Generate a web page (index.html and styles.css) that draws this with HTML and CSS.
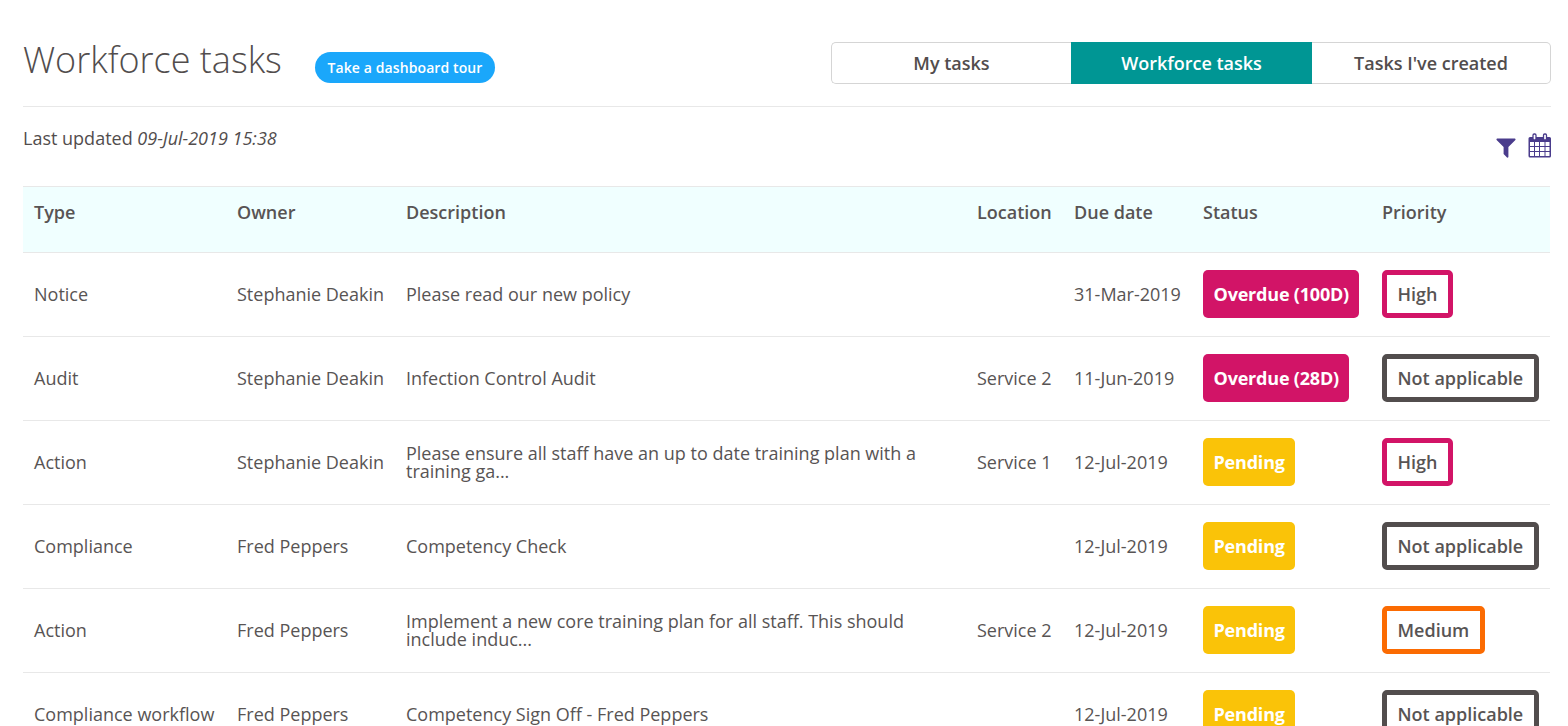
FILE: index.html
```html
<!DOCTYPE html>
<html lang="en">
<head>
    <meta charset="UTF-8">
    <meta name="viewport" content="width=device-width, initial-scale=1.0">
    <title>Workforce tasks</title>
    <link rel="stylesheet" href="styles.css">
</head>
<body>
    <div class="container">
        <header class="page-header">
            <h1>Workforce tasks</h1>
            <button class="tour-btn">Take a dashboard tour</button>
            <div class="tabs">
                <button class="tab">My tasks</button>
                <button class="tab active">Workforce tasks</button>
                <button class="tab">Tasks I've created</button>
            </div>
        </header>

        <div class="toolbar">
            <p class="updated">Last updated <em>09-Jul-2019 15:38</em></p>
            <div class="tools">
                <svg class="filter-icon" viewBox="0 0 20 20" width="20" height="20">
                    <path d="M1 0.5h18q1 0.6 0.4 1.6L12.4 9v10q-0.5 1-1.4 0.5L7.6 16V9L0.6 2.1Q0 1.1 1 0.5z" fill="#4a3c8c"/>
                </svg>
                <svg class="calendar-icon" viewBox="0 0 24 25" width="24" height="25">
                    <path fill-rule="evenodd" fill="#4a3c8c" d="M2 4h19.500q1.500 0 1.500 1.500V23q0 1.500-1.500 1.500H2Q0.500 24.500 0.500 23V5.500Q0.500 4 2 4zM2 9v4h4V9zM7 9v4h4V9zM12 9v4h4.500V9zM17.500 9v4h4V9zM2 14v4h4v-4zM7 14v4h4v-4zM12 14v4h4.500v-4zM17.500 14v4h4v-4zM2 19v4h4v-4zM7 19v4h4v-4zM12 19v4h4.500v-4zM17.500 19v4h4v-4z"/>
                    <rect x="5" y="1" width="3" height="6" rx="1.200" fill="#fff" stroke="#4a3c8c" stroke-width="1.300"/>
                    <rect x="15.500" y="1" width="3" height="6" rx="1.200" fill="#fff" stroke="#4a3c8c" stroke-width="1.300"/>
                </svg>
            </div>
        </div>

        <table class="task-list">
            <thead>
                <tr>
                    <th class="col-type">Type</th>
                    <th class="col-owner">Owner</th>
                    <th class="col-description">Description</th>
                    <th class="col-location">Location</th>
                    <th class="col-due">Due date</th>
                    <th class="col-status">Status</th>
                    <th class="col-priority">Priority</th>
                </tr>
            </thead>
            <tbody>
                <tr>
                    <td>Notice</td>
                    <td class="owner">Stephanie Deakin</td>
                    <td>Please read our new policy</td>
                    <td></td>
                    <td>31-Mar-2019</td>
                    <td><span class="status overdue">Overdue (100D)</span></td>
                    <td><span class="priority high">High</span></td>
                </tr>
                <tr>
                    <td>Audit</td>
                    <td class="owner">Stephanie Deakin</td>
                    <td>Infection Control Audit</td>
                    <td>Service 2</td>
                    <td>11-Jun-2019</td>
                    <td><span class="status overdue">Overdue (28D)</span></td>
                    <td><span class="priority">Not applicable</span></td>
                </tr>
                <tr>
                    <td>Action</td>
                    <td class="owner">Stephanie Deakin</td>
                    <td>Please ensure all staff have an up to date training plan with a training ga...</td>
                    <td>Service 1</td>
                    <td>12-Jul-2019</td>
                    <td><span class="status pending">Pending</span></td>
                    <td><span class="priority high">High</span></td>
                </tr>
                <tr>
                    <td>Compliance</td>
                    <td class="owner">Fred Peppers</td>
                    <td>Competency Check</td>
                    <td></td>
                    <td>12-Jul-2019</td>
                    <td><span class="status pending">Pending</span></td>
                    <td><span class="priority">Not applicable</span></td>
                </tr>
                <tr>
                    <td>Action</td>
                    <td class="owner">Fred Peppers</td>
                    <td>Implement a new core training plan for all staff. This should include induc...</td>
                    <td>Service 2</td>
                    <td>12-Jul-2019</td>
                    <td><span class="status pending">Pending</span></td>
                    <td><span class="priority medium">Medium</span></td>
                </tr>
                <tr>
                    <td>Compliance workflow</td>
                    <td class="owner">Fred Peppers</td>
                    <td>Competency Sign Off - Fred Peppers</td>
                    <td></td>
                    <td>12-Jul-2019</td>
                    <td><span class="status pending">Pending</span></td>
                    <td><span class="priority">Not applicable</span></td>
                </tr>
            </tbody>
        </table>
    </div>
</body>
</html>
```
FILE: styles.css
```css
* {
    box-sizing: border-box;
}

body {
    margin: 0;
    height: 726px;
    overflow: hidden;
    background-color: #fff;
    color: #524d4d;
    font-family: "Open Sans", sans-serif;
    font-size: 18px;
}

.container {
    padding: 0 17px 0 23px;
}

.page-header {
    display: flex;
    align-items: flex-start;
    height: 107px;
    padding-top: 42px;
    border-bottom: 1px solid #e8e8e8;
}

h1 {
    width: 292px;
    margin: 0;
    font-size: 36px;
    font-weight: 300;
    line-height: 36px;
    white-space: nowrap;
}

button {
    font-family: inherit;
    cursor: pointer;
}

.tour-btn {
    width: 180px;
    height: 31px;
    margin-top: 10px;
    padding: 0;
    border: none;
    border-radius: 16px;
    background-color: #1aa7fb;
    color: #fff;
    font-size: 14px;
    font-weight: 600;
    letter-spacing: 0.1px;
    white-space: nowrap;
}

.tabs {
    display: grid;
    grid-template-columns: 240px 241px 239px;
    height: 42px;
    margin-left: auto;
}

.tab {
    padding: 0;
    border: 1px solid #d5d5d5;
    background-color: #fff;
    color: #524d4d;
    font-size: 18px;
    font-weight: 600;
}

.tab:first-child {
    border-right: none;
    border-radius: 5px 0 0 5px;
}

.tab:last-child {
    border-left: none;
    border-radius: 0 5px 5px 0;
}

.tab.active {
    border-color: #009694;
    background-color: #009694;
    color: #fff;
}

.toolbar {
    display: flex;
    justify-content: space-between;
    height: 79px;
}

.updated {
    margin: 19px 0 0;
    line-height: 24px;
}

.tools {
    display: flex;
    align-items: flex-start;
    gap: 12px;
    padding-top: 26px;
    margin-right: -1px;
}

.filter-icon {
    margin-top: 5px;
}

.task-list {
    width: 1527px;
    border-collapse: separate;
    border-spacing: 0;
    table-layout: fixed;
    color: #585454;
}

.task-list th,
.task-list td {
    padding: 0 11px;
    border-top: 1px solid #e8e8e8;
    line-height: 18px;
    text-align: left;
}

.task-list th {
    height: 66px;
    padding-top: 16px;
    background-color: #f0ffff;
    font-weight: 600;
    vertical-align: top;
}

.task-list td {
    height: 84px;
    padding-bottom: 2px;
    vertical-align: middle;
}

.task-list .owner {
    padding-right: 0;
    white-space: nowrap;
}

.col-type {
    width: 203px;
}

.col-owner {
    width: 169px;
}

.col-description {
    width: 571px;
}

.col-location {
    width: 97px;
}

.col-due {
    width: 129px;
}

.col-status,
.col-priority {
    width: 179px;
}

.status,
.priority {
    display: block;
    width: max-content;
    height: 48px;
    border-radius: 5px;
    white-space: nowrap;
}

.status {
    padding: 0 10px 0 10.5px;
    color: #fff;
    font-weight: 700;
    letter-spacing: -0.2px;
    line-height: 48px;
}

.overdue {
    background-color: #d21467;
}

.pending {
    background-color: #fac308;
}

.priority {
    padding: 0 10.5px;
    border: 5px solid #524d4d;
    font-weight: 600;
    line-height: 38px;
}

.high {
    border-color: #d21467;
}

.medium {
    border-color: #fb6b02;
}
```
